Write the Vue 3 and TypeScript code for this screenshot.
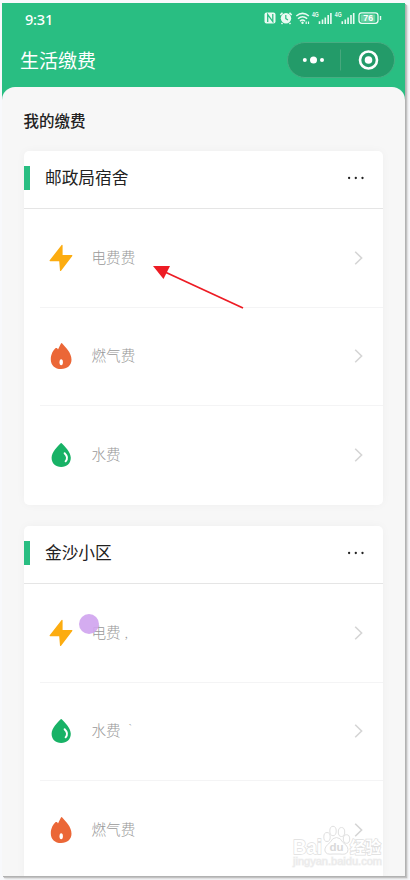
<script setup lang="ts">
type Kind = 'power' | 'gas' | 'water'
interface Bill { kind: Kind; label: string; mark?: string; touched?: boolean }
interface Home { name: string; bills: Bill[] }

const homes: Home[] = [
  {
    name: '邮政局宿舍',
    bills: [
      { kind: 'power', label: '电费费' },
      { kind: 'gas', label: '燃气费' },
      { kind: 'water', label: '水费' },
    ],
  },
  {
    name: '金沙小区',
    bills: [
      { kind: 'power', label: '电费', mark: ',', touched: true },
      { kind: 'water', label: '水费', mark: '‵' },
      { kind: 'gas', label: '燃气费' },
    ],
  },
]
</script>

<template>
  <div class="page">
    <div class="phone">
      <header class="top">
        <div class="status">
          <span class="time">9:31</span>
          <svg class="status-icons" width="120" height="16" viewBox="0 0 120 16" fill="none">
            <rect x="0.5" y="2.5" width="11" height="11" rx="2" fill="#e9faf2" />
            <path d="M3.7 12V4.5L8.8 11.6V4" stroke="#29be82" stroke-width="1.3" />
            <circle cx="22" cy="8.3" r="5.2" fill="#e9faf2" />
            <path d="M16.3 5L18.5 2.8M27.7 5L25.5 2.8M18.5 13L17.5 14M25.5 13L26.5 14" stroke="#e9faf2" stroke-width="1.6" />
            <path d="M21.8 5V8.6L24 10" stroke="#29be82" stroke-width="1.2" />
            <g stroke="#e9faf2" stroke-width="1.5">
              <path d="M32.3 6Q38.5 .8 44.9 6M34 8.7Q38.5 4.8 43.2 8.7M36 11.2Q38.5 8.8 41 11.2" />
            </g>
            <circle cx="38.5" cy="12.8" r="1.2" fill="#e9faf2" />
            <path d="M42.2 11.5v2.5M44.5 11.5v2.5" stroke="#e9faf2" stroke-width="1.2" />
            <g v-for="x in [0, 22.8]" :key="x" :transform="`translate(${x} 0)`">
              <text x="48" y="7" class="net" textLength="6.8" lengthAdjust="spacingAndGlyphs">4G</text>
              <path d="M55.5 14v-2.7M58.5 14v-4.5M61.3 14v-6.5M64.2 14V5M66.9 14V3" stroke="#e9faf2" stroke-width="1.6" />
            </g>
            <rect x="95" y="2.8" width="19" height="10.5" rx="2.8" stroke="#e9faf2" stroke-width="1.3" />
            <rect x="96.7" y="4.5" width="14.5" height="7.2" rx="1" fill="#6dd3a6" />
            <path d="M116.5 6v4" stroke="#e9faf2" stroke-width="1.4" />
            <text x="99.3" y="11.3" class="battery">76</text>
          </svg>
        </div>
        <div class="nav">
          <h1>生活缴费</h1>
          <div class="capsule">
            <svg width="106" height="34" viewBox="0 0 106 34" fill="#fff">
              <circle cx="16.8" cy="17" r="2" />
              <circle cx="25.5" cy="17" r="3.5" />
              <circle cx="34" cy="17" r="2" />
              <path d="M52.5 6.5v21" stroke="#47a77d" />
              <circle cx="80.5" cy="17" r="8.5" fill="none" stroke="#fff" stroke-width="2.6" />
              <circle cx="80.5" cy="17" r="3.8" />
            </svg>
          </div>
        </div>
      </header>
      <main class="sheet">
        <h2>我的缴费</h2>
        <section v-for="home in homes" :key="home.name" class="card">
          <div class="card-head">
            <i class="bar"></i>
            <h3>{{ home.name }}</h3>
            <svg width="18" height="4" viewBox="0 0 18 4" fill="#222">
              <circle cx="2.1" cy="2" r="1.15" /><circle cx="8.8" cy="2" r="1.15" /><circle cx="15.5" cy="2" r="1.15" />
            </svg>
          </div>
          <div v-for="bill in home.bills" :key="bill.label" class="bill">
            <svg class="icon" width="26" height="28" viewBox="0 0 26 28">
              <path v-if="bill.kind === 'power'" d="M13.6.9L1.7 16.3Q1.2 17.2 2.2 17.2H11.2L12 26.8Q12.5 27.4 13.1 26.7L24.3 12Q24.8 10.9 23.8 10.9H14.6V1.2Q14.2.3 13.6.9Z" fill="#fcac10" />
              <template v-else-if="bill.kind === 'gas'">
                <path d="M14 1.3C17.3 5.2 23.5 10.5 23.5 17.8C23.5 23.2 19.3 27 13.1 27C6.9 27 2.8 23.2 2.8 17.4C2.8 12.5 5.2 8.2 7.7 6.1C8.7 5.6 9.4 6.2 10 7.4C11 6 11.9 3.3 13 1.6Q13.5.8 14 1.3Z" fill="#eb6737" />
                <ellipse cx="13.2" cy="20.3" rx="1.7" ry="3" fill="#fff" />
              </template>
              <template v-else>
                <path d="M12.7 2.3Q13.2 1.8 13.7 2.3C16.7 5.2 22.8 11.4 22.8 16.7C22.8 22.4 18.8 25.9 13.2 25.9C7.6 25.9 3.6 22.4 3.6 16.7C3.6 11.4 9.7 5.2 12.7 2.3Z" fill="#18b266" />
                <path d="M16.6 12.2Q20.9 16.4 17.6 20.3" fill="none" stroke="#fff" stroke-width="1.9" stroke-linecap="round" />
              </template>
            </svg>
            <span class="label">{{ bill.label }}<small v-if="bill.mark">{{ bill.mark }}</small></span>
            <svg class="chevron" width="10" height="16" viewBox="0 0 10 16" fill="none">
              <path d="M1.2 1.7L7.6 8L1.2 14.3" stroke="#d5d5d5" stroke-width="1.6" />
            </svg>
            <i v-if="bill.touched" class="touch"></i>
          </div>
        </section>
      </main>
    </div>
    <svg class="arrow" width="94" height="46" viewBox="0 0 94 46">
      <path d="M14 7L92 43" stroke="#ed1c24" stroke-width="1.8" />
      <path d="M2 1H19L12.5 14Z" fill="#ed1c24" />
    </svg>
    <svg class="watermark" width="100" height="46" viewBox="0 0 100 46">
      <g fill="#fff" stroke="#dedede" stroke-width="1">
        <ellipse cx="37" cy="13" rx="3.2" ry="4.5" />
        <ellipse cx="43" cy="7" rx="3.2" ry="4.7" />
        <ellipse cx="51.5" cy="8" rx="3.2" ry="4.5" />
        <ellipse cx="56.5" cy="15" rx="3.2" ry="4.3" />
        <path d="M46.5 13.5Q50.5 13.5 53 18.5Q59.5 23 57.5 28Q56 31 50 30H43Q36 31 35 27Q34 23 40 18.5Q42.5 13.5 46.5 13.5Z" />
      </g>
      <text x="3" y="30" class="wm-big" textLength="29" lengthAdjust="spacingAndGlyphs">Bai</text>
      <text x="39.5" y="27" class="wm-du">du</text>
      <text x="60" y="28.5" class="wm-cn">经验</text>
      <text x="3" y="41" class="wm-url" textLength="89" lengthAdjust="spacingAndGlyphs">jingyan.baidu.com</text>
    </svg>
  </div>
</template>

<style>
body {
  margin: 0;
  overflow: hidden;
}
</style>

<style scoped>
.page {
  position: relative;
  box-sizing: border-box;
  width: 410px;
  height: 880px;
  padding: 3px 5px 4px 2px;
  overflow: hidden;
  background: #f8f9fc;
  font-family: Roboto, "Noto Sans CJK SC", sans-serif;
}
.phone {
  display: flex;
  flex-direction: column;
  height: 873px;
  overflow: hidden;
  background: #29be82;
  box-shadow: 1px 1px 0 #b2b2b2, 2px 2px 1px #c2c2c2, 3px 3px 2px #ddd;
}
.top {
  flex: none;
  height: 84px;
  color: #fff;
}
.status {
  display: flex;
  align-items: center;
  justify-content: space-between;
  height: 31px;
  padding: 0 21px 0 23px;
}
.status-icons {
  margin-top: -1px;
}
.time {
  font-family: "Noto Sans", sans-serif;
  font-size: 14.5px;
  font-weight: 500;
  letter-spacing: -0.2px;
}
.net {
  font: 700 6.5px "Liberation Sans", sans-serif;
  fill: #e9faf2;
}
.battery {
  font: 700 8.8px "Liberation Sans", sans-serif;
  fill: #fff;
}
.nav {
  display: flex;
  align-items: center;
  justify-content: space-between;
  height: 53px;
  padding: 0 10px 0 18px;
  box-sizing: border-box;
}
h1, h2, h3 {
  margin: 0;
}
h1 {
  padding-top: 2px;
  font-size: 19px;
  font-weight: 400;
  line-height: 28px;
}
.capsule {
  height: 34px;
  margin-top: -1px;
  border-radius: 18px;
  border: 1px solid #47ad82;
  background: #239b69;
}
.capsule svg {
  display: block;
}
.sheet {
  flex: 1;
  min-height: 0;
  overflow: hidden;
  padding: 0 22px;
  border-radius: 13px 13px 0 0;
  background: #f7f7f7;
}
h2 {
  height: 64px;
  margin-left: -0.5px;
  font-size: 15.5px;
  font-weight: 500;
  line-height: 70px;
  color: #222;
}
.card {
  height: 353.5px;
  margin-bottom: 21.5px;
  border-radius: 5px;
  background: #fff;
  box-shadow: 0 0 10px rgba(0, 0, 0, 0.035);
}
.card-head {
  display: flex;
  align-items: center;
  box-sizing: border-box;
  height: 58px;
  padding-right: 18px;
  border-bottom: 1px solid #e5e5e5;
}
.card-head svg {
  margin-top: -3px;
}
.bar {
  width: 6px;
  height: 24px;
  margin-top: -3px;
  background: #29be82;
}
h3 {
  flex: 1;
  margin: -6px 0 0 15px;
  font-size: 16.7px;
  font-weight: 400;
  color: #222;
}
.bill {
  position: relative;
  display: flex;
  align-items: center;
  box-sizing: border-box;
  height: 98.5px;
  margin-left: 16px;
  padding: 0 19px 0 8px;
}
.card-head + .bill {
  height: 97.5px;
}
.bill + .bill {
  border-top: 1px solid #f4f4f5;
}
.label {
  flex: 1;
  margin: -3px 0 0 17.5px;
  font-size: 14.6px;
  font-weight: 300;
  font-family: "Noto Sans CJK SC", sans-serif;
  color: #999;
}
.label small {
  margin-left: 4px;
  font-size: 12px;
}
.touch {
  position: absolute;
  left: 38.5px;
  top: 30px;
  width: 20px;
  height: 20px;
  border-radius: 50%;
  background: rgba(207, 163, 238, 0.9);
}
.arrow {
  position: absolute;
  left: 151px;
  top: 265px;
}
.watermark {
  position: absolute;
  left: 290px;
  top: 824px;
  opacity: 0.9;
}
.wm-big, .wm-du, .wm-cn, .wm-url {
  fill: #fff;
  stroke: #dcdcdc;
  stroke-width: 1.4px;
  paint-order: stroke;
  font-family: "Liberation Sans", sans-serif;
  font-weight: 700;
}
.wm-big {
  font-size: 20px;
}
.wm-du {
  font-size: 11.5px;
  fill: #d6d6d6;
  stroke: none;
}
.wm-cn {
  font-family: "Noto Sans CJK SC", sans-serif;
  font-size: 15.5px;
}
.wm-url {
  font-size: 10px;
  font-weight: 400;
  fill: #e9e9e9;
  stroke: #f2f2f2;
  stroke-width: 1px;
}
</style>
